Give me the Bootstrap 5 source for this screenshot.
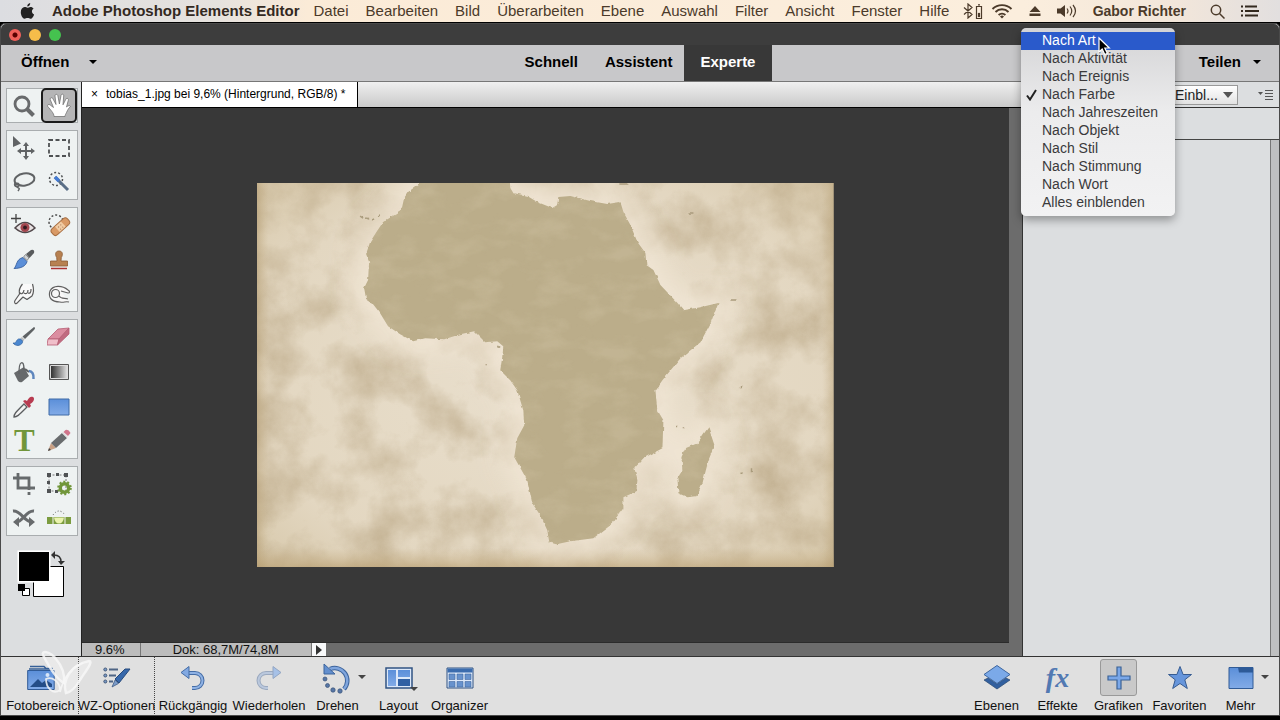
<!DOCTYPE html>
<html lang="de">
<head>
<meta charset="utf-8">
<meta name="viewport" content="width=device-width, initial-scale=1">
<title>Adobe Photoshop Elements Editor</title>
<link href="https://cdn.jsdelivr.net/npm/bootstrap@5.3.0/dist/css/bootstrap.min.css" rel="stylesheet">
<style>
  body { font-family: "Liberation Sans", Arial, sans-serif; font-size: 13px; line-height: 16px; color: #111; background: #000; height: 100vh; }
  button { border: 0; background: none; padding: 0; color: inherit; }
  svg { display: block; flex: none; }

  .sys-bar { height: 22px; padding-left: 20px; padding-right: 21px; font-size: 15px; color: #4b3a2a; background: linear-gradient(90deg, #dcdde1 0, #e6e2de 17%, #fbebd7 24%, #fbeedd 80%, #f2e6da 92%, #e2dfdf 100%); }
  .sys-bar a { color: inherit; text-decoration: none; white-space: nowrap; }
  .sys-menu { gap: 17px; margin-left: 14px; }
  .app-name { margin-left: 17px; }
  .sys-bar .app-name { color: #33291f; }
  .user-name { font-size: 14px; }

  .app-window { margin-top: 1px; margin-bottom: 4px; border: 1px solid #4a4a4a; border-radius: 5px 5px 0 0; background: #dcdee0; }
  .title-strip { height: 21px; gap: 8px; padding-left: 8px; background: #3d3d3d; border-radius: 5px 5px 0 0; }
  .light { width: 12px; height: 12px; border-radius: 50%; }
  .light-close { background: radial-gradient(circle, #5a0000 0 2px, #f0605a 3px); }
  .light-min { background: #f5bd4a; }
  .light-max { background: #45c24f; }

  .mode-bar { height: 37px; background: #c8c8ca; border-bottom: 1px solid #777; font-size: 15px; font-weight: 700; padding-left: 20px; padding-right: 18px; color: #000; }
  .mode-bar button { font-weight: 700; padding-bottom: 2px; }
  .mode-bar .mode-btn { padding: 0 12px 2px 15px; }
  .mode-bar .mode-on { background: #383838; color: #fff; padding: 0 17px 2px 16px; }
  .side-cell { flex: 1 1 0; }
  .caret { width: 0; height: 0; border: 4px solid transparent; border-top: 4px solid currentColor; border-bottom: 0; }

  .tool-rail { width: 80px; padding: 6px 3px 0 5px; gap: 7px; background: #dcdee0; }
  .tool-set { border: 1px solid #a9adaf; background: #eef2f2; }
  .tool-line { height: 35px; padding-right: 1px; }
  .tool-set .tool-line:first-child, .tool-set .tool-line:last-child { height: 34px; }
  .tool-set .tool-line:only-child { height: 33px; }
  .tool-line button { flex: 1 1 0; display: flex; align-items: center; justify-content: center; }
  .tool-line .tool-on { background: #b5b5b6; outline: 2px solid #1b1b1b; outline-offset: -1px; border-radius: 4px; }
  .type-glyph { font: 700 31px/32px "Liberation Serif", serif; color: #71963a; }
  .swatches { padding: 7px 0 0 10px; }

  .stage-col { border-left: 1px solid #222; min-width: 0; background: #6c6c6c; }
  .tab-strip { height: 26px; background: linear-gradient(#f0f0f0, #c9c9c9); border-bottom: 1px solid #000; }
  .doc-tab { background: #fff; border-right: 1px solid #000; padding: 0 12px 2px 9px; font-size: 12px; gap: 8px; white-space: nowrap; color: #000; }
  .stage { background: #383838; margin-right: 13px; border-bottom: 1px solid #2b2b2b; }
  .photo { width: 62.2%; aspect-ratio: 3 / 2; }
  .status { height: 13px; line-height: 13px; }
  .status-cell { background: #bcbcbc; border-right: 1px solid #777; }
  .status-zoom { padding: 0 15px 0 13px; }
  .status-doc { padding: 0 32px; }

  .side-panel { width: 257px; border-left: 1px solid #333; background: #dcdee0; }
  .panel-head { height: 26px; border-bottom: 1px solid #333; padding-right: 5px; gap: 20px; }
  .panel-sub { height: 32px; border-bottom: 1px solid #444; }
  .panel-scroll { width: 9px; background: #bfc0c1; border-left: 1px solid #777; }
  .filter-select { display: block; width: 80px; height: 20px; border: 1px solid #999; background: linear-gradient(#fff, #e2e2e2); appearance: none; font-size: 14px; line-height: 18px; padding: 0 0 0 16px; border-radius: 0; color: #222; }
  .select-caret { right: 5px; top: 7px; color: #555; border-width: 6px 5px 0; }

  .pop-menu { left: -2px; top: -54px; width: 154px; padding: 4px 0; border-radius: 5px; background: linear-gradient(#d3d3d5, #ececed 45%, #f2f2f3); box-shadow: 0 4px 10px rgba(0,0,0,.35); z-index: 5; font-size: 14px; color: #3a3a3c; }
  .pop-menu button { display: block; width: 100%; height: 18px; line-height: 16px; padding-bottom: 2px; text-align: left; padding-left: 21px; position: relative; }
  .pop-menu .picked { background: #2a5acb; color: #fff; }
  .pop-menu svg { position: absolute; left: 5px; top: 3px; }
  .pop-menu .pointer { left: 77px; top: 8px; z-index: 2; }

  .task-bar { height: 59px; border-top: 1px solid #333; background: #e0e0e0; padding: 0 8px 0 2px; }
  .task { width: 61px; height: 57px; display: flex; flex-direction: column; align-items: center; white-space: nowrap; position: relative; padding-top: 2px; }
  .task .pic { width: 37px; height: 37px; margin-bottom: 2px; display: flex; align-items: center; justify-content: center; flex: none; }
  .task-wide { width: 76px; }
  .task-dots { border-right: 1px dotted #444; }
  .fx-glyph { font: italic 700 28px/32px "Liberation Serif", serif; color: #5279b2; }
  .pic-on { background: #c9c9c9; border: 1px solid #999; border-radius: 3px; }
  .task .caret { position: absolute; left: 51px; top: 18px; color: #444; }
  .task .caret-low { left: 42px; top: 30px; }
  .logo-mark { left: 38px; bottom: 18px; z-index: 4; pointer-events: none; }
</style>
</head>
<body class="d-flex flex-column overflow-hidden">

<nav class="sys-bar d-flex align-items-center flex-shrink-0" aria-label="Systemmenü">
  <svg width="15" height="17" viewBox="0 0 15 17" fill="#222"><path d="M10.2 0c.2 1.700-1.200 3.500-2.900 3.500C7 2 8.500.2 10.200 0ZM7.500 4.700c.7 0 1.700-.9 3.200-.8 1 0 2.200.5 2.900 1.600-2.500 1.500-2 4.900.5 5.900-.5 1.700-2 4.300-3.500 4.400-1.100.1-1.600-.7-3-.7s-1.900.7-3 .7C2.800 15.700.8 12.400.8 9.300.8 6.200 2.600 4.200 4.600 4.100c1.200 0 2.200.6 2.900.6Z"/></svg>
  <a href="#" class="app-name fw-bold">Adobe Photoshop Elements Editor</a>
  <div class="sys-menu d-flex">
    <a href="#">Datei</a><a href="#">Bearbeiten</a><a href="#">Bild</a><a href="#">Überarbeiten</a><a href="#">Ebene</a><a href="#">Auswahl</a><a href="#">Filter</a><a href="#">Ansicht</a><a href="#">Fenster</a><a href="#">Hilfe</a>
  </div>
  <div class="d-flex align-items-center ms-auto">
    <svg width="20" height="16" viewBox="0 0 20 16" fill="none" stroke="#4b3a2a" stroke-width="1.200"><path d="m1 4.500 8 7-4 3.500V1l4 3.500-8 7M13.500 3.500h5v12h-5zM15 1.800h2"/><path d="M15.500 10.500h1v3h-1z" fill="#4b3a2a"/></svg>
    <svg class="ms-2" width="22" height="16" viewBox="0 0 22 16" fill="none" stroke="#4b3a2a" stroke-width="1.900"><path d="M1.500 6a13.500 13.500 0 0 1 19 0M4.500 9a9.200 9.200 0 0 1 13 0M7.600 12a5 5 0 0 1 6.800 0"/><path d="m9 13.500 2 2 2-2a3 3 0 0 0-4 0Z" fill="#4b3a2a" stroke="none"/></svg>
    <svg class="ms-3" width="12" height="12" viewBox="0 0 12 12" fill="#4b3a2a"><path d="m6 1 5.500 6H.5zM.5 8.500h11V11H.5z"/></svg>
    <svg class="ms-3" width="20" height="14" viewBox="0 0 20 14" fill="none" stroke="#4b3a2a" stroke-width="1.200"><path d="M0 4.500h3.500L8 1v12L3.500 9.500H0z" fill="#4b3a2a" stroke="none"/><path d="M10 4.500q2 2.500 0 5M13 2.500q3.500 4.500 0 9M16 1q5 6 0 12"/></svg>
    <a href="#" class="user-name fw-bold ms-3 me-4">Gabor Richter</a>
    <svg width="15" height="15" viewBox="0 0 15 15" fill="none" stroke="#4b3a2a" stroke-width="1.500"><circle cx="6" cy="6" r="4.700"/><path d="m9.500 9.500 5 5"/></svg>
    <svg class="ms-3" width="18" height="12" viewBox="0 0 18 12" stroke="#33291f" stroke-width="1.800"><path d="M0 1.500h2M4 1.500h12M0 6h2M4 6h14M0 10.500h2M4 10.500h13"/></svg>
  </div>
</nav>

<div class="app-window d-flex flex-column flex-grow-1 position-relative">
  <div class="title-strip d-flex align-items-center flex-shrink-0">
    <span class="light light-close"></span><span class="light light-min"></span><span class="light light-max"></span>
  </div>

  <div class="mode-bar d-flex flex-shrink-0">
    <div class="side-cell d-flex align-items-center"><button type="button" class="d-flex align-items-center gap-3">Öffnen <span class="caret ms-1"></span></button></div>
    <div class="d-flex">
      <button type="button" class="mode-btn">Schnell</button>
      <button type="button" class="mode-btn">Assistent</button>
      <button type="button" class="mode-on">Experte</button>
    </div>
    <div class="side-cell d-flex align-items-center justify-content-end"><button type="button" class="d-flex align-items-center gap-2">Teilen <span class="caret ms-1"></span></button></div>
  </div>

  <main class="d-flex flex-grow-1">
    <aside class="tool-rail d-flex flex-column flex-shrink-0">
      <div class="tool-set">
        <div class="tool-line d-flex">
          <button type="button" aria-label="Zoom"><svg width="24" height="24" viewBox="0 0 24 24" fill="none" stroke="#686a6c"><circle cx="10" cy="10" r="7" stroke-width="2.800"/><path d="m15 15 6.500 6.500" stroke-width="4"/></svg></button>
          <button type="button" class="tool-on" aria-label="Hand"><svg width="26" height="27" viewBox="0 0 26 27" fill="#fff" stroke="#666" stroke-width=".7" stroke-linejoin="round"><path d="M8 24.500C8 21 4.500 18 1.800 14.500c-1-1.700 1-2.700 2.400-1.500L7.500 15.500 4.300 7.700c-.6-2 1.800-2.700 2.600-1L10 12.500 9 4c-.1-2 2.500-2.200 2.900-.2l1.500 8.200L15 3.500c.4-2 2.800-1.600 2.700.3L17 12.800l2.800-5.500c.9-1.700 3.100-.8 2.500 1L20.500 15c1.500-1.500 3.500-1.700 4-.5-2.200 2-2.800 3.500-4 6-.8 1.700-1.500 2.700-1.500 4z"/></svg></button>
        </div>
      </div>
      <div class="tool-set">
        <div class="tool-line d-flex">
          <button type="button" aria-label="Verschieben"><svg width="24" height="26" viewBox="0 0 24 26" fill="#606365"><path d="M1 1v11l8-3.500z"/><path d="m14 7 3 4h-2v4h4v-2l4 3-4 3v-2h-4v4h2l-3 4-3-4h2v-4H9v2l-4-3 4-3v2h4v-4h-2z"/></svg></button>
          <button type="button" aria-label="Auswahlrechteck"><svg width="24" height="20" viewBox="0 0 24 20" fill="none" stroke="#4e5153" stroke-width="1.800"><path d="M2 2h20v16H2z" stroke-dasharray="4 2.500"/></svg></button>
        </div>
        <div class="tool-line d-flex">
          <button type="button" aria-label="Lasso"><svg width="24" height="22" viewBox="0 0 24 22" fill="none" stroke="#606365" stroke-width="2"><ellipse cx="12.500" cy="8.500" rx="10" ry="6" transform="rotate(-9 12.500 8.500)"/><path d="M3 12c-2 4 4 5 4 2s-5-2-3 1 5 1 2 5" stroke-width="1.500"/></svg></button>
          <button type="button" aria-label="Zauberstab"><svg width="24" height="24" viewBox="0 0 24 24" fill="none"><circle cx="9" cy="9" r="6.500" stroke="#4e5153" stroke-width="1.500" stroke-dasharray="2 2"/><path d="m8 7 13 13" stroke="#596e86" stroke-width="3"/><path d="m8 7 4 4" stroke="#447bd2" stroke-width="3.500"/></svg></button>
        </div>
      </div>
      <div class="tool-set">
        <div class="tool-line d-flex">
          <button type="button" aria-label="Rote Augen"><svg width="26" height="24" viewBox="0 0 26 24" fill="none"><path d="M5 1v9M0 5.500h10" stroke="#444" stroke-width="1.300"/><path d="M4 15q10-11 20 0-10 9-20 0Z" fill="#e7e1e2" stroke="#51484b" stroke-width="1.500"/><circle cx="14" cy="14.500" r="4.500" fill="#a3474f"/><circle cx="14" cy="14.500" r="1.900" fill="#321c21"/></svg></button>
          <button type="button" aria-label="Reparaturpinsel"><svg width="26" height="24" viewBox="0 0 26 24" fill="none"><circle cx="10" cy="9" r="7" stroke="#444" stroke-width="1.400" stroke-dasharray="2 2"/><g transform="rotate(-42 14 14)"><rect x="4" y="10" width="21" height="8" rx="3" fill="#d99a66" stroke="#a66e42"/><path d="M10.500 10.500h8v7h-8z" fill="#f1cca4"/><path d="M13 12.500v1m3-1v1m-3 2v1m3-1v1" stroke="#9e6c49"/></g></svg></button>
        </div>
        <div class="tool-line d-flex">
          <button type="button" aria-label="Smartpinsel"><svg width="24" height="24" viewBox="0 0 24 24"><path d="M2 20.500C5 18 4 11 11 9.500l4 4C14 18 9 20.500 2 20.500Z" fill="#5b8fd8" stroke="#2f5797" stroke-width=".8"/><path d="m11.500 9 2-2.500L17 10l-2 2.500z" fill="#cfd3d5" stroke="#555" stroke-width=".6"/><path d="m14 6 5-4q4-1 3 3l-4.500 5z" fill="#585b5d"/></svg></button>
          <button type="button" aria-label="Kopierstempel"><svg width="22" height="22" viewBox="0 0 22 22" fill="#b78151" stroke="#8a5a34" stroke-width=".8"><path d="M11 2c4 0 4 4 2.300 6.500L13 12h6.500v5h-17v-5H9l-.3-3.500C7 6 7 2 11 2Z"/><path d="M3 19.500h16" stroke="#a33" stroke-width="1.500"/></svg></button>
        </div>
        <div class="tool-line d-flex">
          <button type="button" aria-label="Wischfinger"><svg width="24" height="24" viewBox="0 0 24 24" fill="#fafafa" stroke="#5a5a5a" stroke-width="1.200" stroke-linejoin="round"><path d="M10.500 2C8 5 6.500 8 7.500 12L3 18.500c-1.500 2.500.8 4.200 2.500 2.200L11 15l4 2.500 5-3.500c2-3.500 2-7 .5-12"/><path d="M7.500 10c1 3 4 2 4.500-2M12 11c2 1.500 4 .5 4-3M16 11c2 .8 3.200-.5 3-4" fill="none"/></svg></button>
          <button type="button" aria-label="Schwamm"><svg width="24" height="22" viewBox="0 0 24 22" fill="#f8f8f8" stroke="#606060" stroke-width="1.200"><path d="M22 19c-4-1-5 1-9 0C4 19 1 14 3 8c3-6 12-6 18-1 2 1 2 3 0 3l-7-2"/><circle cx="8.500" cy="10.500" r="4"/><path d="M12 13c2 3 5 2 9 3"/></svg></button>
        </div>
      </div>
      <div class="tool-set">
        <div class="tool-line d-flex">
          <button type="button" aria-label="Pinsel"><svg width="24" height="22" viewBox="0 0 24 22"><path d="M22 1q2 1 0 3l-9 9-2.500-2.500z" fill="#5e6264"/><path d="m10 11 2.500 2.500-1.500 2-3-3z" fill="#b9bcbe"/><path d="M1 17c4 1 3-5 7-4 5 2 2 6-2 6.500-2 0-4-1-5-2.500Z" fill="#4a87cf" stroke="#2c5f9d" stroke-width=".7"/></svg></button>
          <button type="button" aria-label="Radiergummi"><svg width="24" height="20" viewBox="0 0 24 20" stroke="#b65e74" stroke-width=".8"><path d="m1 12 10-10 11-1-10 11z" fill="#db8da0"/><path d="m1 12 11 0-1.500 6H0z" fill="#f0bfca"/><path d="M12 12 22 1v6L10.500 18z" fill="#c06b80"/></svg></button>
        </div>
        <div class="tool-line d-flex">
          <button type="button" aria-label="Füllwerkzeug"><svg width="24" height="24" viewBox="0 0 24 24"><path d="m2 13 10-6 5 9-7 6q-2 1-4-1z" fill="#66696b"/><path d="M7 14c0-6 0-10 2-11s3 1 3 7" fill="none" stroke="#606365" stroke-width="1.300"/><path d="m13 9 4 3" stroke="#606365" stroke-width="2"/><path d="M17 11c3 0 5 3 4.500 8" fill="none" stroke="#5e86bd" stroke-width="2.500"/></svg></button>
          <button type="button" aria-label="Verlauf"><svg width="22" height="18" viewBox="0 0 22 18"><defs><linearGradient id="gr"><stop offset="0" stop-color="#222"/><stop offset="1" stop-color="#eee"/></linearGradient></defs><path d="M1.500 1.500h19v15h-19z" fill="url(#gr)" stroke="#555" stroke-width="1"/><path d="M2.500 2.500h17v13h-17z" fill="none" stroke="#ddd"/></svg></button>
        </div>
        <div class="tool-line d-flex">
          <button type="button" aria-label="Farbpipette"><svg width="24" height="24" viewBox="0 0 24 24"><path d="M2 22c0-3 1-4 10-13l3 3C6 21 5 22 2 22Z" fill="#f2f2f2" stroke="#5b5e60" stroke-width="1.300"/><path d="m11 6 2-1 2 1c2-4 4-5 6-4s1 5-3 7l1 2-2 2z" fill="#b83c51"/></svg></button>
          <button type="button" aria-label="Form"><svg width="22" height="18" viewBox="0 0 22 18"><defs><linearGradient id="bl" x2="0" y2="1"><stop offset="0" stop-color="#5b8fd9"/><stop offset="1" stop-color="#82abe7"/></linearGradient></defs><path d="M1 1h20v16H1z" fill="url(#bl)" stroke="#3f6ba6"/></svg></button>
        </div>
        <div class="tool-line d-flex">
          <button type="button" class="type-glyph" aria-label="Text">T</button>
          <button type="button" aria-label="Buntstift"><svg width="24" height="24" viewBox="0 0 24 24"><path d="m1 22 3-8 5 5z" fill="#c9a084"/><path d="m1 22 1-3 2 2z" fill="#444"/><path d="M4 14 15 4l5 5L9 19z" fill="#696c6e"/><path d="m15 4 1-1 5 5-1 1z" fill="#ddd"/><path d="m16.500 3 2-2q3-1 5 3l-2.500 3z" fill="#d0758b"/></svg></button>
        </div>
      </div>
      <div class="tool-set">
        <div class="tool-line d-flex">
          <button type="button" aria-label="Freistellen"><svg width="24" height="24" viewBox="0 0 24 24" fill="none" stroke="#666a6c" stroke-width="2.800"><path d="M6 1v15h17M1 6h16v12M17 20v3"/></svg></button>
          <button type="button" aria-label="Neu zusammensetzen"><svg width="26" height="24" viewBox="0 0 26 24"><path d="M3 3h17v16H3z" fill="none" stroke="#777" stroke-dasharray="2 1.500"/><path d="M1 1h4v4H1zM10 1h3v3h-3zM18 1h4v4h-4zM1 9h3v3H1zM1 17h4v4H1zM9 18h3v3H9z" fill="#4f5254"/><circle cx="18.500" cy="16" r="4.200" fill="none" stroke="#71963a" stroke-width="3.400"/><circle cx="18.500" cy="16" r="6.300" fill="none" stroke="#71963a" stroke-width="2" stroke-dasharray="2 1.960"/></svg></button>
        </div>
        <div class="tool-line d-flex">
          <button type="button" aria-label="Ausstechform"><svg width="24" height="20" viewBox="0 0 24 20" fill="none" stroke="#686b6d" stroke-width="3"><path d="M1 3c8-1 11 11 19 11M22 3C14 2 11 14 4 14"/><path d="m1 14 6-5v10zM23 14l-6-5v10z" fill="#686b6d" stroke="none"/></svg></button>
          <button type="button" aria-label="Gerade ausrichten"><svg width="26" height="20" viewBox="0 0 26 20"><path d="M7 7q6-8 12 0" fill="none" stroke="#555" stroke-dasharray="1 2"/><path d="M1 9h24v7H1z" fill="#7b9c3f"/><path d="M8 9.500h10q-1 6-5 6t-5-6Z" fill="#eaf3ae"/><path d="M7 8v9M19 8v9" stroke="#f4f4f4"/></svg></button>
        </div>
      </div>
      <div class="swatches"><svg width="52" height="50" viewBox="0 0 52 50"><path d="M17.500 16.500h30v30h-30z" fill="#fff" stroke="#000"/><path d="M1.500.5h33v32h-33z" fill="#fff"/><path d="M3 2h30v29H3z"/><path d="M6.500 38.500h7v7h-7z" fill="#fff" stroke="#000"/><path d="M2 34h7v7H2z"/><path d="M38 5c5 0 7 2 7 7" fill="none" stroke="#333" stroke-width="1.500"/><path d="m35 5 4-4v8zM45 15l-3-4h7z" fill="#333"/></svg></div>
    </aside>

    <section class="stage-col d-flex flex-column flex-grow-1">
      <div class="tab-strip d-flex flex-shrink-0">
        <div class="doc-tab d-flex align-items-center"><button type="button" aria-label="Schließen">×</button><span>tobias_1.jpg bei 9,6% (Hintergrund, RGB/8) *</span></div>
      </div>
      <div class="stage d-flex flex-grow-1 align-items-center justify-content-center">
        <svg class="photo" viewBox="257 183 576 384" role="img" aria-label="Karte von Afrika">
          <defs>
            <radialGradient id="paper" cx=".5" cy=".5" r=".72"><stop offset="0" stop-color="#e9dfcd"/><stop offset=".72" stop-color="#e3d7c1"/><stop offset="1" stop-color="#d6c7a9"/></radialGradient>
            <linearGradient id="edgeX"><stop offset="0" stop-color="#b0986c" stop-opacity=".5"/><stop offset=".02" stop-color="#c4ad83" stop-opacity="0"/><stop offset=".98" stop-color="#c4ad83" stop-opacity="0"/><stop offset="1" stop-color="#b0986c" stop-opacity=".4"/></linearGradient>
            <linearGradient id="edgeY" x2="0" y2="1"><stop offset=".95" stop-color="#c4ad83" stop-opacity="0"/><stop offset="1" stop-color="#b89e70" stop-opacity=".6"/></linearGradient>
            <filter id="blotch" x="0" y="0" width="1" height="1" color-interpolation-filters="sRGB"><feTurbulence type="fractalNoise" baseFrequency=".02" numOctaves="6" seed="8"/><feColorMatrix values="0 0 0 0 .7  0 0 0 0 .62  0 0 0 0 .48  1.900 0 0 0 -.7"/></filter>
            <filter id="fleck" x="0" y="0" width="1" height="1" color-interpolation-filters="sRGB"><feTurbulence type="fractalNoise" baseFrequency=".03 .05" numOctaves="6" seed="11"/><feColorMatrix values="0 0 0 0 .83  0 0 0 0 .78  0 0 0 0 .66  2.600 0 0 0 -1.100"/></filter>
            <filter id="rough"><feTurbulence type="fractalNoise" baseFrequency=".18" numOctaves="2" seed="5"/><feDisplacementMap in="SourceGraphic" scale="3" xChannelSelector="R" yChannelSelector="G"/></filter>
            <filter id="halo" x="-.2" y="-.2" width="1.400" height="1.400"><feGaussianBlur stdDeviation="12"/></filter>
            <path id="land" d="M421 170 420 183 408 192 404 198 402 207 398 213 391 217 383 222 377 231 370 242 366 254 369 262 368 280 364 288 366 299 372 303 380 313 388 326 400 334 413 341 425 338 444 339 460 334 474 331 480 337 485 342 497 341 503 346 502 357 500 370 510 380 517 390 523 410 524 425 517 438 514 457 527 480 532 503 540 515 547 530 549 542 556 544 570 541 593 538 610 525 623 508 623 497 636 491 637 480 634 468 643 458 662 448 663 420 657 410 655 390 662 380 680 358 700 342 710 323 718 303 700 307 683 310 677 303 660 285 653 270 646 265 645 253 637 242 630 225 623 212 620 202 607 204 590 201 570 196 558 197 557 205 552 208 537 202 527 196 513 193 510 188 509 170ZM708 427 714 445 708 460 702 483 696 496 687 497 678 493 677 478 682 470 681 457 685 448 697 443 703 434Z"/>
            <clipPath id="landClip"><use href="#land"/></clipPath>
          </defs>
          <path d="M257 183h576v384H257z" fill="url(#paper)"/>
          <path d="M257 183h576v384H257z" filter="url(#blotch)" opacity=".6"/>
          <path d="M257 183h576v384H257z" fill="url(#edgeX)"/>
          <path d="M257 183h576v384H257z" fill="url(#edgeY)"/>
          <use href="#land" fill="#f1e6d5" stroke="#f1e6d5" stroke-width="26" filter="url(#halo)" opacity=".85"/>
          <g filter="url(#rough)">
            <use href="#land" fill="#bbad8a"/>
            <path d="m360 216 3 2m3 0 3 1m3 1 2-1m4-2 2-1m308-3h5m37 87h6M676 424v3m7 0v2m57 44h2m9-5v4m-11-86v2M497 346l3 1m-14 17v2M619 184h8" stroke="#aa9c7d" stroke-width="1.500"/>
          </g>
          <g clip-path="url(#landClip)"><path d="M350 183h380v370H350z" filter="url(#fleck)" opacity=".3"/></g>
        </svg>
      </div>
      <div class="status d-flex flex-shrink-0">
        <div class="status-cell status-zoom">9.6%</div>
        <div class="status-cell status-doc">Dok: 68,7M/74,8M</div>
        <button type="button" class="bg-light px-1" aria-label="Mehr Statusinfos"><svg width="6" height="10" viewBox="0 0 6 10"><path d="m0 0 6 5-6 5z" fill="#333"/></svg></button>
      </div>
    </section>

    <aside class="side-panel d-flex flex-column flex-shrink-0 position-relative">
      <div class="panel-head d-flex align-items-center justify-content-end">
        <div class="position-relative">
          <select class="filter-select" aria-label="Grafiken einblenden"><option>Einbl...</option></select>
          <span class="caret select-caret position-absolute"></span>
        </div>
        <button type="button" aria-label="Bedienfeldmenü"><svg width="16" height="12" viewBox="0 0 16 12"><path d="M0 3h5L2.500 6z" fill="#555"/><path d="M7 1.500h8M7 4.500h8M7 7.500h8M7 10.500h8" stroke="#555"/></svg></button>
      </div>
      <div class="panel-sub"></div>
      <div class="d-flex flex-grow-1 justify-content-end"><div class="panel-scroll"></div></div>

      <div class="pop-menu position-absolute" role="menu">
        <button type="button" role="menuitem" class="picked">Nach Art</button>
        <button type="button" role="menuitem">Nach Aktivität</button>
        <button type="button" role="menuitem">Nach Ereignis</button>
        <button type="button" role="menuitem"><svg width="11" height="12" viewBox="0 0 11 12" fill="none" stroke="#222" stroke-width="2"><path d="m1 6.500 3 4L10 1"/></svg>Nach Farbe</button>
        <button type="button" role="menuitem">Nach Jahreszeiten</button>
        <button type="button" role="menuitem">Nach Objekt</button>
        <button type="button" role="menuitem">Nach Stil</button>
        <button type="button" role="menuitem">Nach Stimmung</button>
        <button type="button" role="menuitem">Nach Wort</button>
        <button type="button" role="menuitem">Alles einblenden</button>
        <svg class="pointer" width="13" height="20" viewBox="0 0 13 20" fill="#000" stroke="#fff" stroke-width="1.200"><path d="M1 2v14l3.200-3 2.600 5.500 2.500-1.200L6.800 12h4.500z"/></svg>
      </div>
    </aside>
  </main>

  <footer class="task-bar d-flex justify-content-between flex-shrink-0">
    <div class="d-flex">
      <button type="button" class="task task-wide task-dots"><span class="pic"><svg width="28" height="26" viewBox="0 0 28 26"><path d="M3 1.500h14l2 2h7M2 4h23" fill="none" stroke="#355f97" stroke-width="1.500"/><path d="M.7 5.500h26.500v19H.7z" fill="url(#bl)" stroke="#315b96"/><path d="m3 22 8-8 4 4 4-3 6 4v3z" fill="#244d87"/><circle cx="20.500" cy="10" r="2" fill="#d7e5f8"/></svg></span>Fotobereich</button>
      <button type="button" class="task task-wide task-dots"><span class="pic"><svg width="28" height="24" viewBox="0 0 28 24"><path d="M6 3.500h9M6 9.500h7M6 15.500h4" stroke="#4f6584" stroke-width="2"/><g fill="#7899c7" stroke="#455a78"><circle cx="2.300" cy="3.500" r="1.500"/><circle cx="2.300" cy="9.500" r="1.500"/><circle cx="2.300" cy="15.500" r="1.500"/></g><path d="M12 13 22 3h5L16 17z" fill="#3768ab" stroke="#274a7c"/><path d="m12 14 3.500 3.500L9 21z" fill="#7b9bc8" stroke="#35527c" stroke-width=".7"/></svg></span>WZ-Optionen</button>
      <button type="button" class="task task-wide"><span class="pic"><svg width="26" height="26" viewBox="0 0 26 26"><path d="M7 8h8a7.500 7.500 0 0 1 0 15h-3" fill="none" stroke="#456da6" stroke-width="4"/><path d="M8 8h7a7.500 7.500 0 0 1 0 15h-3" fill="none" stroke="#8fb2e4" stroke-width="2"/><path d="m1 7.500 8-6v12z" fill="#82a9e2" stroke="#456da6"/></svg></span>Rückgängig</button>
      <button type="button" class="task task-wide"><span class="pic"><svg width="26" height="26" viewBox="0 0 26 26"><path d="M18 8h-8a7.500 7.500 0 0 0 0 15h2" fill="none" stroke="#9ba9bf" stroke-width="4"/><path d="M18 8h-8a7.500 7.500 0 0 0 0 15h2" fill="none" stroke="#bac8dd" stroke-width="2"/><path d="m25 7.500-8-6v12z" fill="#a6c1e7" stroke="#93a6c3"/></svg></span>Wiederholen</button>
      <button type="button" class="task"><span class="pic"><svg width="32" height="32" viewBox="0 0 32 32"><path d="M8 7a12.500 12.500 0 0 1 14 20" fill="none" stroke="#3d649c" stroke-width="4.500"/><path d="M8 7a12.500 12.500 0 0 1 14 20" fill="none" stroke="#7fa5dd" stroke-width="2.500"/><path d="M2 2v10h11z" fill="#638fce" stroke="#3d649c"/><g fill="#5776a6" stroke="#3a5377" stroke-width=".7"><circle cx="3" cy="17" r="2"/><circle cx="5.500" cy="23.500" r="2"/><circle cx="11" cy="28" r="2.200"/><circle cx="18" cy="29" r="2.200"/></g></svg></span>Drehen<span class="caret"></span></button>
      <button type="button" class="task"><span class="pic"><svg width="28" height="22" viewBox="0 0 28 22"><path d="M1 1h26v20H1z" fill="#dce8f9" stroke="#315382" stroke-width="1.500"/><path d="M3 3h8v16H3zM13 3h12v7H13z" fill="url(#bl)"/><path d="M13 12h12v7H13z" fill="#3060a3"/></svg></span>Layout<span class="caret caret-low"></span></button>
      <button type="button" class="task"><span class="pic"><svg width="28" height="22" viewBox="0 0 28 22"><path d="M1 1h26v20H1z" fill="#dce8f9" stroke="#315382"/><path d="M1.500 1.500h25v4h-25z" fill="#3b6cae"/><path d="M3 7h6v5.500H3zM11 7h6v5.500h-6zM19 7h6v5.500h-6zM3 14.500h6V20H3zM11 14.500h6V20h-6zM19 14.500h6V20h-6z" fill="#6792cd" stroke="#42689f" stroke-width=".6"/></svg></span>Organizer</button>
    </div>
    <div class="d-flex">
      <button type="button" class="task"><span class="pic"><svg width="28" height="28" viewBox="0 0 28 28"><path d="m1 16 4-2 9 6 9-6 4 2-13 9z" fill="#315f9f" stroke="#26466f" stroke-width=".7"/><path d="m14 1.500 13 9-13 9-13-9z" fill="#7ba9e8" stroke="#3d669f"/></svg></span>Ebenen</button>
      <button type="button" class="task"><span class="pic fx-glyph">fx</span>Effekte</button>
      <button type="button" class="task"><span class="pic pic-on"><svg width="24" height="24" viewBox="0 0 24 24"><path d="M10 1h4v9h9v4h-9v9h-4v-9H1v-4h9z" fill="#79a7e9" stroke="#3b6296" stroke-width="1.200"/></svg></span>Grafiken</button>
      <button type="button" class="task"><span class="pic"><svg width="26" height="26" viewBox="0 0 26 26"><path d="m13 1.500 3.100 8h8.400l-6.700 5.300 2.500 8.700L13 18.500l-7.300 5 2.500-8.700L1.500 9.500h8.400z" fill="#6796dc" stroke="#365b91"/></svg></span>Favoriten</button>
      <button type="button" class="task"><span class="pic"><svg width="26" height="24" viewBox="0 0 26 24"><path d="M1 1.500h24v21H1z" fill="url(#bl)" stroke="#315b96"/><path d="M10 1.500h15v5H11z" fill="#2d5a98"/></svg></span>Mehr<span class="caret"></span></button>
    </div>
  </footer>
  <svg class="logo-mark position-absolute" width="54" height="48" viewBox="0 0 54 48" fill="none" stroke="#f7f7f7" stroke-opacity=".85" stroke-width="2.500"><path d="M25 34C17 30 9 16 4 6c-2-5 7-4 13 4 6 7 9 16 8 24Z" fill="#fff" fill-opacity=".3"/><path d="M27 44c-4-12 4-28 23-32 5 0-4 11-9 19-4 7-8 12-14 13Z" fill="#fff" fill-opacity=".3"/><path d="M7 30c6-3 14 3 14 11-7 5-14-2-14-11ZM21 43c4-16 12-25 23-29" stroke-width="1.800"/></svg>
</div>

<script src="https://cdn.jsdelivr.net/npm/bootstrap@5.3.0/dist/js/bootstrap.bundle.min.js"></script>
</body>
</html>
